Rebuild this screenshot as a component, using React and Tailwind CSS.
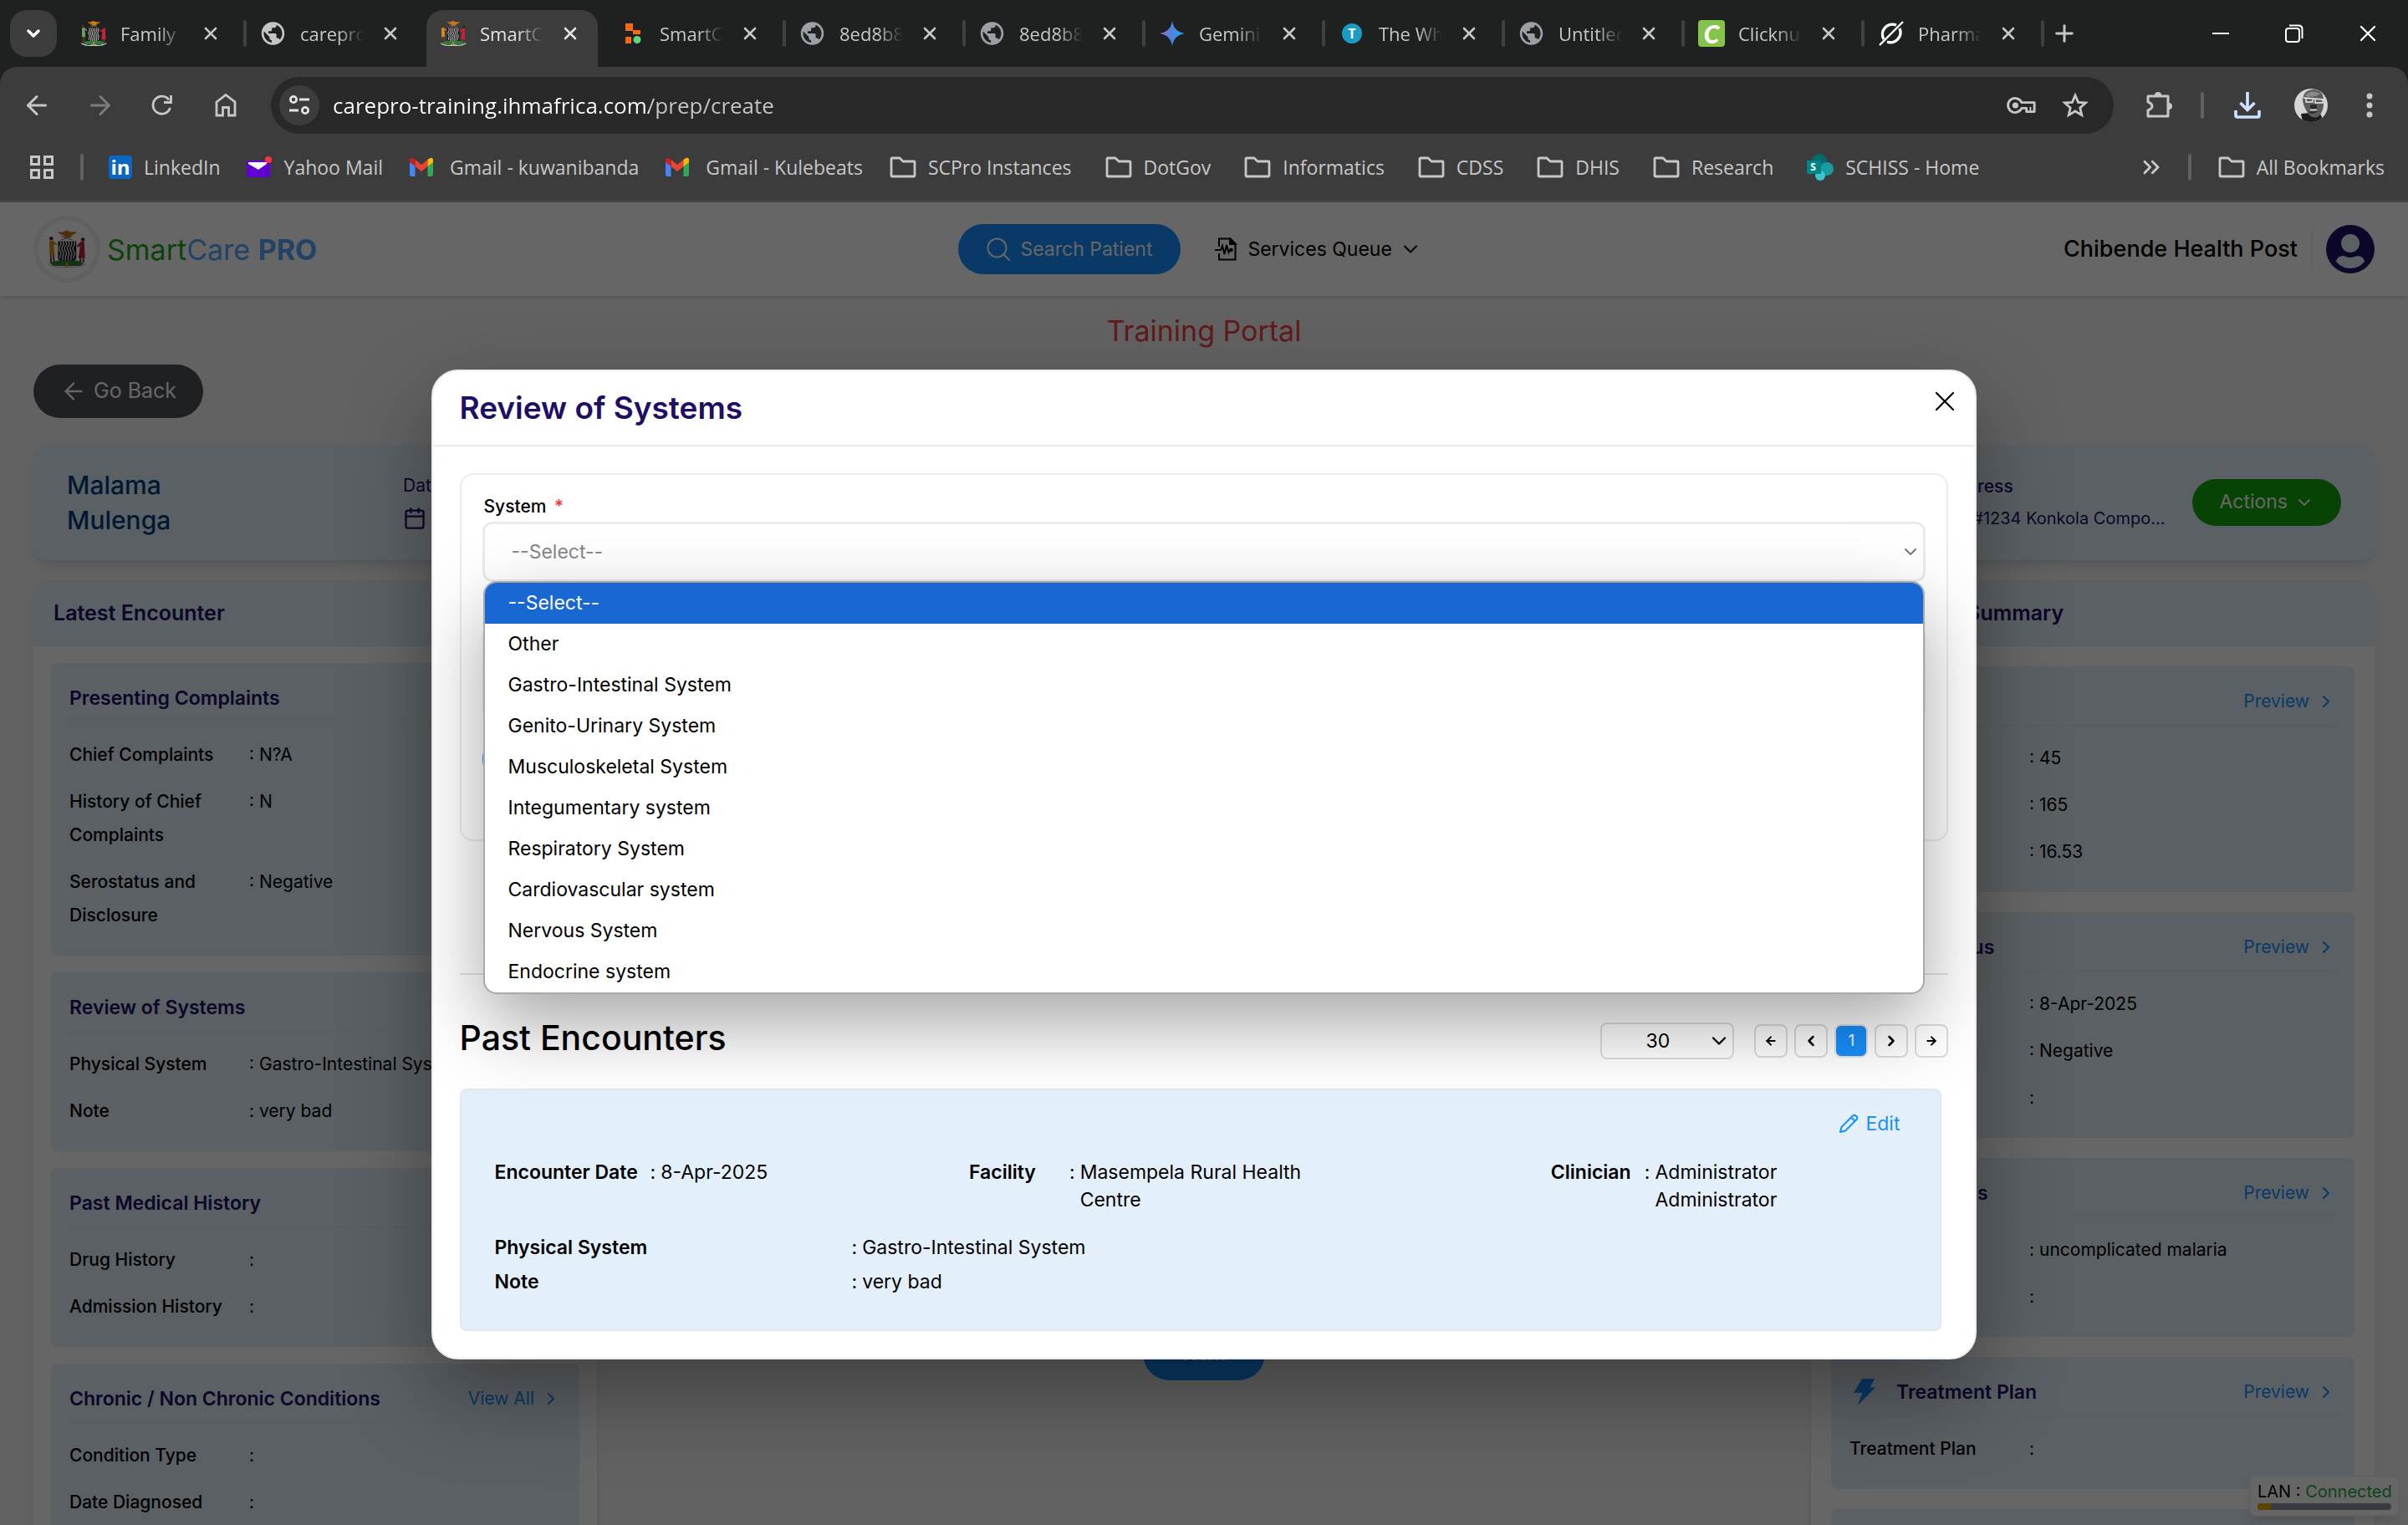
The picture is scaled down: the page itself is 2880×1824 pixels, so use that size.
import React from "react";
import {
  ArrowLeft,
  ArrowRight,
  Calendar,
  ChevronDown,
  ChevronLeft,
  ChevronRight,
  ChevronsRight,
  MapPin,
  Plus,
  X,
} from "lucide-react";
import { MdPublic } from "react-icons/md";

/* ---------- Drawn icons ---------- */

function CoatOfArms({ className, left = "#d98a1c" }) {
  return (
    <svg viewBox="0 0 144 146" className={className} aria-hidden="true">
      <path d="M38 8 Q52 14 62 8 Q72 2 80 8 Q92 14 108 8 Q104 20 88 22 L84 30 H64 L60 22 Q44 20 38 8Z" fill="#c9791a" />
      <path d="M50 40 L92 26 M94 40 L52 26" stroke="#8a6a4a" strokeWidth="3" />
      <path d="M40 44 H106 V106 Q104 118 73 126 Q42 118 40 106Z" fill="#141414" />
      <g stroke="#e8e8e8" strokeWidth="4" fill="none">
        <path d="M47 44 q7 9 0 18 t0 18 t0 18 v10" />
        <path d="M57 44 q7 9 0 18 t0 18 t0 18 v16" />
        <path d="M67 44 q7 9 0 18 t0 18 t0 18 v20" />
        <path d="M77 44 q7 9 0 18 t0 18 t0 18 v20" />
        <path d="M87 44 q7 9 0 18 t0 18 t0 18 v16" />
        <path d="M97 44 q7 9 0 18 t0 18 t0 18 v10" />
      </g>
      <circle cx="15" cy="34" r="7" fill="#5a2d1a" />
      <path d="M8 42 H22 L36 54 L33 59 L24 53 L27 92 H9Z" fill={left} />
      <path d="M11 92 H16 L17 124 H11Z M20 92 H25 L28 124 H22Z" fill="#6b3a22" />
      <circle cx="130" cy="38" r="7" fill="#4a1d16" />
      <path d="M123 46 H135 L138 106 H114 L120 62 L111 66 L108 60Z" fill="#c8203a" />
      <path d="M118 106 H124 V122 H118Z M129 106 H135 V122 H129Z" fill="#6b3a22" />
      <path d="M14 124 Q40 108 72 116 Q106 108 132 124 L126 134 H20Z" fill="#2e7d3c" />
      <path d="M4 124 Q30 142 66 134 H80 Q112 142 142 124 V130 Q112 146 72 140 Q30 146 4 130Z" fill="#d2d2d2" />
      <path d="M68 120 H76 V138 H68Z" fill="#d98a1c" />
    </svg>
  );
}

function Globe({ className }) {
  return <MdPublic className={className} aria-hidden="true" />;
}

function Blocks() {
  return (
    <svg viewBox="0 0 32 32" className="size-8" aria-hidden="true">
      <path d="M7 4h9v8h9v5H16v-4H7z" fill="#f9690e" />
      <path d="M7 20h7v8H7z" fill="#f9690e" />
      <circle cx="21" cy="23.500" r="4.5" fill="#5fd77c" />
    </svg>
  );
}

function GeminiStar() {
  return (
    <svg viewBox="0 0 32 32" className="size-8" aria-hidden="true">
      <defs>
        <linearGradient id="gem" x1="0" y1="0" x2="1" y2="0">
          <stop offset="0" stopColor="#a06bc4" />
          <stop offset="0.5" stopColor="#4a86e0" />
          <stop offset="1" stopColor="#22a7e8" />
        </linearGradient>
      </defs>
      <path d="M16 1 Q18 14 31 16 Q18 18 16 31 Q14 18 1 16 Q14 14 16 1Z" fill="url(#gem)" />
    </svg>
  );
}

function LetterDisc() {
  return (
    <span className="flex size-6 items-center justify-center rounded-full bg-[#1a9cc4] text-base font-bold text-white">
      T
    </span>
  );
}

function LetterC() {
  return (
    <span className="flex size-8 items-center justify-center rounded-sm bg-[#84c44a] font-[Lato] text-3xl leading-none font-black text-white italic">
      C
    </span>
  );
}

function SlashedRing() {
  return (
    <svg viewBox="0 0 32 32" className="size-8" fill="none" stroke="#fff" aria-hidden="true">
      <path d="M26 10a12 12 0 0 1-15 16M7 23a12 12 0 0 1 15-17" strokeWidth="3.4" />
      <path d="M2 30 L30 2" strokeWidth="2.4" />
    </svg>
  );
}

function TuneIcon() {
  return (
    <svg viewBox="0 0 28 28" className="size-7" fill="none" stroke="#e3e3e3" strokeWidth="2.8" aria-hidden="true">
      <circle cx="7" cy="7" r="3.6" />
      <path d="M14 7h12M2 20h11" />
      <circle cx="21" cy="20" r="3.6" />
    </svg>
  );
}

function HomeIcon() {
  return (
    <svg viewBox="0 0 28 32" className="h-8 w-7" fill="none" stroke="#c7c7c7" strokeWidth="2.8" aria-hidden="true">
      <path d="M3 12 L14 3.5 L25 12 V28 H17.5 V18.5 H10.5 V28 H3Z" />
    </svg>
  );
}

function ReloadIcon() {
  return (
    <svg viewBox="0 0 28 28" className="size-7" fill="none" stroke="#c7c7c7" strokeWidth="2.8" aria-hidden="true">
      <path d="M23.5 17 A10.5 10.5 0 1 1 22 7.5" />
      <path d="M24.5 2 V10.5 H16" />
    </svg>
  );
}

function KeyIcon() {
  return (
    <svg viewBox="0 0 38 24" className="h-6 w-9" fill="none" stroke="#c7c7c7" strokeWidth="3" aria-hidden="true">
      <path d="M19 8.5 A9 9 0 1 0 19 15.5 H25 V20 H35 V8.500Z" strokeLinejoin="round" />
      <circle cx="11" cy="12" r="3.8" fill="#c7c7c7" stroke="none" />
      <path d="M30 20 V14" strokeWidth="2" />
    </svg>
  );
}

function StarIcon() {
  return (
    <svg viewBox="0 0 34 32" className="h-8 w-9" fill="none" stroke="#c7c7c7" strokeWidth="2.8" aria-hidden="true">
      <path d="M17 4 L20.600 12.300 L29.500 13 L22.800 19 L24.800 27.600 L17 23 L9.200 27.600 L11.200 19 L4.500 13 L13.400 12.300Z" />
    </svg>
  );
}

function PuzzleIcon() {
  return (
    <svg viewBox="0 0 36 36" className="size-9" aria-hidden="true">
      <path
        d="M5 7 H29 V31 H5 V24 Q10 22 10 19 Q10 16 5 14Z"
        fill="none"
        stroke="#c7c7c7"
        strokeWidth="3"
        strokeLinejoin="round"
      />
      <path d="M13 6 a4 4 0 0 1 8 0z M30 15 a4 4 0 0 1 0 8z" fill="#c7c7c7" />
    </svg>
  );
}

function DownloadIcon() {
  return (
    <svg viewBox="0 0 32 32" className="size-8" fill="none" stroke="#d0e2ff" strokeWidth="3.6" aria-hidden="true">
      <path d="M16 0 V21 M7.500 13 L16 21.500 L24.500 13" />
      <path d="M2 22 V28 Q2 30 4 30 H28 Q30 30 30 28 V22" />
    </svg>
  );
}

function ProfilePhoto() {
  return (
    <svg viewBox="0 0 40 40" className="size-10" aria-hidden="true">
      <defs>
        <clipPath id="face">
          <circle cx="20" cy="20" r="20" />
        </clipPath>
      </defs>
      <g clipPath="url(#face)">
        <rect width="40" height="40" fill="#d6d6d6" />
        <path d="M8 30 L30 28 L36 40 H10Z" fill="#1c1c1c" />
        <path d="M10 12 Q12 1 23 1 Q35 2 35 14 Q36 28 28 34 Q20 36 16 29 Q10 20 10 12Z" fill="#5b5b5b" />
        <path d="M13 8 Q20 0 31 6 Q26 10 16 10Z" fill="#8a8a8a" />
        <path d="M11 11 L35 13 M14 11 v5 h8 v-4 M25 12 v5 h9 v-4" stroke="#eee" strokeWidth="1.300" fill="none" />
        <path d="M20 20 h6 v3 h-6z M18 28 q5 2 9-1" stroke="#222" strokeWidth="1.500" fill="#333" />
        <path d="M19 25.500 h8" stroke="#ddd" strokeWidth="1.500" />
      </g>
    </svg>
  );
}

function AppsGrid() {
  return (
    <svg viewBox="0 0 28 28" className="size-7" fill="none" stroke="#c7c7c7" strokeWidth="3" aria-hidden="true">
      <path d="M1.500 1.500h9v9h-9zM17.500 1.500h9v9h-9zM1.500 17.500h9v9h-9zM17.500 17.500h9v9h-9z" />
    </svg>
  );
}

function FolderIcon() {
  return (
    <svg viewBox="0 0 32 26" className="h-7 w-8" fill="none" stroke="#c7c7c7" strokeWidth="2.800" strokeLinejoin="round" aria-hidden="true">
      <path d="M2 3 Q2 2 3 2 H12 L16 6 H29 Q30 6 30 7 V23 Q30 24 29 24 H3 Q2 24 2 23Z" />
    </svg>
  );
}

function LinkedInIcon() {
  return (
    <span className="flex size-7 items-center justify-center rounded-sm bg-[#0a66c2] text-2xl leading-none font-bold text-white">
      in
    </span>
  );
}

function YahooMailIcon() {
  return (
    <svg viewBox="0 0 30 28" className="h-7 w-8" aria-hidden="true">
      <path d="M0 6 H28 V24 Q28 26 26 26 H2 Q0 26 0 24Z" fill="#6001d2" />
      <path d="M2 8 H24 V10 L14 17 L2 10Z" fill="#fff" />
      <circle cx="26" cy="5" r="4" fill="#ff333a" />
    </svg>
  );
}

function GmailIcon() {
  return (
    <svg viewBox="0 0 30 24" className="mr-1 h-6 w-8" aria-hidden="true">
      <path d="M1 4 L7.500 9 V23 H3 Q1 23 1 21Z" fill="#4285f4" />
      <path d="M29 4 L22.500 9 V23 H27 Q29 23 29 21Z" fill="#34a853" />
      <path d="M7.500 3 L15 9 L22.500 3 V11 L15 17 L7.500 11Z" fill="#ea4335" />
      <path d="M1 4 Q1 0 4.500 1 L7.500 3 V11 L1 6Z" fill="#c5221f" />
      <path d="M29 4 Q29 0 25.500 1 L22.500 3 V11 L29 6Z" fill="#fbbc04" />
    </svg>
  );
}

function SharePointIcon() {
  return (
    <span className="relative block size-8">
      <svg viewBox="0 0 32 32" className="size-8" aria-hidden="true">
        <circle cx="15" cy="9" r="9" fill="#036c70" />
        <circle cx="24" cy="18" r="8" fill="#1a9ba1" />
        <circle cx="16" cy="26" r="6" fill="#37c6d0" />
        <rect x="0" y="8" width="17" height="16" rx="1" fill="#038387" />
      </svg>
      <span className="absolute top-2 left-1 text-xs leading-4 font-bold text-white">S</span>
    </span>
  );
}

function SearchIcon() {
  return (
    <svg viewBox="0 0 28 28" className="size-7" fill="none" stroke="currentColor" strokeWidth="2" strokeLinecap="round" aria-hidden="true">
      <circle cx="12.500" cy="12.500" r="11" />
      <path d="M20.500 20.500 L27 27" />
    </svg>
  );
}

function PulseDocument() {
  return (
    <svg viewBox="0 0 28 28" className="size-7" fill="none" stroke="currentColor" strokeWidth="2" aria-hidden="true">
      <path d="M6 11 V1.500 H19.500 L25.500 7.500 V26.500 H6 V19" />
      <path d="M19 1.500 V8 H25.500Z" fill="currentColor" />
      <path d="M1 15 H8 L10 10 L12.500 20 L15 9 L17.500 18 L19 15 H21" />
      <circle cx="20.500" cy="15" r="1.200" fill="currentColor" />
    </svg>
  );
}

function UserAvatar() {
  return (
    <svg viewBox="0 0 58 58" className="size-[58px]" aria-hidden="true">
      <circle cx="29" cy="29" r="29" fill="#1e0f66" />
      <circle cx="29" cy="22" r="11" fill="#e3effb" />
      <path d="M12 44 Q13 37 21 37 Q29 41 37 37 Q45 37 46 44 Q39 52 29 52 Q19 52 12 44Z" fill="#e3effb" />
    </svg>
  );
}

function Bolt() {
  return (
    <svg viewBox="0 0 28 34" className="ml-1 h-8 w-7" aria-hidden="true">
      <path d="M11 0 H27 L21 11 H28 L5 34 L11 18 H0Z" fill="#1890ff" />
    </svg>
  );
}

function PencilIcon() {
  return (
    <svg viewBox="0 0 24 24" className="size-6" fill="none" stroke="currentColor" strokeWidth="2" strokeLinejoin="round" aria-hidden="true">
      <path d="M2 22 L3.500 16 L17 2.500 Q19 1 21.300 3 Q23 5 21.500 7 L8 20.500Z M15 4.500 L19.500 9" />
    </svg>
  );
}

/* ---------- Browser frame ---------- */

const globe = "size-[34px] -ml-px text-[#9aa0a6]";

const tabs = [
  { title: "Family", icon: <CoatOfArms className="size-8" left="#6fa06a" />, rule: true },
  { title: "carepro", icon: <Globe className="-ml-px size-[34px] text-[#c4c4c4]" /> },
  { title: "SmartC", icon: <CoatOfArms className="size-8" />, active: true },
  { title: "SmartC", icon: <Blocks />, rule: true },
  { title: "8ed8b8", icon: <Globe className={globe} />, rule: true },
  { title: "8ed8b8", icon: <Globe className={globe} />, rule: true },
  { title: "Gemini", icon: <GeminiStar />, rule: true },
  { title: "The Wh", icon: <LetterDisc />, rule: true },
  { title: "Untitled", icon: <Globe className={globe} />, rule: true },
  { title: "Clicknu", icon: <LetterC />, rule: true },
  { title: "Pharma", icon: <SlashedRing />, rule: true },
];

const siteBookmarks = [
  { label: "LinkedIn", icon: <LinkedInIcon /> },
  { label: "Yahoo Mail", icon: <YahooMailIcon /> },
  { label: "Gmail - kuwanibanda", icon: <GmailIcon /> },
  { label: "Gmail - Kulebeats", icon: <GmailIcon /> },
];

const folderBookmarks = [
  { label: "SCPro Instances", icon: <FolderIcon /> },
  { label: "DotGov", icon: <FolderIcon /> },
  { label: "Informatics", icon: <FolderIcon /> },
  { label: "CDSS", icon: <FolderIcon /> },
  { label: "DHIS", icon: <FolderIcon /> },
  { label: "Research", icon: <FolderIcon /> },
  { label: "SCHISS - Home", icon: <SharePointIcon /> },
];

function Tab({ tab }) {
  return (
    <div className="flex h-full w-[215px] items-center justify-between">
      <div
        className={
          tab.active
            ? "flex h-full w-[205px] items-center rounded-t-[20px] bg-[#3c3c3c] pb-3 pl-4 text-[#e3e3e3]"
            : "flex h-full w-[205px] items-center pb-3 pl-4 text-[#c7c7c7]"
        }
      >
        <span className="flex w-8 shrink-0 items-center justify-center">{tab.icon}</span>
        <span className="ml-4 w-[76px] overflow-hidden mask-r-from-60% text-[22px] whitespace-nowrap">{tab.title}</span>
        <button type="button" aria-label="Close tab" className="ml-4 flex size-8 items-center justify-center">
          <X className="size-6" strokeWidth={2.6} />
        </button>
      </div>
      {tab.rule && <span className="mb-3 h-8 w-1 rounded-full bg-[#3f4141]" />}
    </div>
  );
}

function BookmarkLink({ b }) {
  return (
    <a href="#bookmark" className="flex items-center gap-3.5">
      {b.icon}
      {b.label}
    </a>
  );
}

function BrowserFrame() {
  return (
    <header className="shrink-0 bg-[#1f2121] font-['Open_Sans',sans-serif] text-[#c7c7c7]">
      <div className="flex h-20 justify-between">
        <div className="flex pt-3 pl-3">
          <button type="button" aria-label="Search tabs" className="mr-3 flex size-14 items-center justify-center rounded-[20px] bg-[#3c3c3c] text-white">
            <ChevronDown className="size-6" strokeWidth={3.5} />
          </button>
          {tabs.map((tab, i) => (
            <Tab key={i} tab={tab} />
          ))}
          <button type="button" aria-label="New tab" className="mb-3 ml-1 flex size-10 items-center justify-center self-center">
            <Plus className="size-8" strokeWidth={2.2} />
          </button>
        </div>
        <div className="flex items-center gap-14 pr-8 text-white">
          <button type="button" aria-label="Minimize" className="flex size-8 items-center justify-center">
            <span className="h-0.5 w-5 bg-white" />
          </button>
          <button type="button" aria-label="Restore" className="flex size-8 items-center justify-center">
            <svg viewBox="0 0 22 22" className="size-[22px]" fill="none" stroke="#fff" strokeWidth="2" aria-hidden="true">
              <rect x="1" y="5" width="16" height="16" rx="3" />
              <path d="M5 1.500 H16 Q20.500 1.500 20.500 6 V17" />
            </svg>
          </button>
          <button type="button" aria-label="Close window" className="flex size-8 items-center justify-center">
            <X className="size-8" strokeWidth={1.6} />
          </button>
        </div>
      </div>

      <div className="rounded-t-[20px] bg-[#3c3c3c]">
        <div className="flex items-center pt-3 pr-9 pl-6">
          <button type="button" aria-label="Back" className="mr-9 p-0.5">
            <ArrowLeft className="size-9" strokeWidth={2} />
          </button>
          <button type="button" aria-label="Forward" className="mr-10 p-0.5 text-[#7c7c7c]">
            <ArrowRight className="size-9" strokeWidth={2} />
          </button>
          <button type="button" aria-label="Reload" className="mr-12">
            <ReloadIcon />
          </button>
          <button type="button" aria-label="Home" className="mr-10">
            <HomeIcon />
          </button>
          <div className="flex h-[68px] grow items-center rounded-full bg-[#282828] pr-7 pl-2.5">
            <button type="button" aria-label="Site information" className="mr-4 flex size-12 items-center justify-center rounded-full bg-[#3c3c3c]">
              <TuneIcon />
            </button>
            <input
              type="text"
              aria-label="Address"
              defaultValue="carepro-training.ihmafrica.com/prep/create"
              className="grow bg-[linear-gradient(90deg,#ffffff_378px,#c7c7c7_378px)] bg-clip-text text-[26px] text-transparent outline-none"
            />
            <button type="button" aria-label="Passwords" className="mr-7">
              <KeyIcon />
            </button>
            <button type="button" aria-label="Bookmark">
              <StarIcon />
            </button>
          </div>
          <button type="button" aria-label="Extensions" className="ml-9">
            <PuzzleIcon />
          </button>
          <span className="ml-8 h-8 w-1 rounded-full bg-[#606060]" />
          <button type="button" aria-label="Downloads" className="ml-9">
            <DownloadIcon />
          </button>
          <button type="button" aria-label="Profile" className="ml-10">
            <ProfilePhoto />
          </button>
          <button type="button" aria-label="Menu" className="ml-10 flex w-5 justify-center">
            <svg viewBox="0 0 8 30" className="h-[30px] w-2" fill="#c7c7c7" aria-hidden="true">
              <circle cx="4" cy="4" r="3.500" />
              <circle cx="4" cy="15" r="3.500" />
              <circle cx="4" cy="26" r="3.500" />
            </svg>
          </button>
        </div>

        <nav className="flex h-[82px] items-center border-b-2 border-[#484848] pr-7 pl-9 text-[23px] whitespace-nowrap">
          <button type="button" aria-label="Apps">
            <AppsGrid />
          </button>
          <span className="mr-[30px] ml-8 h-8 w-1 rounded-full bg-[#606060]" />
          <div className="flex items-center gap-[30px]">
            {siteBookmarks.map((b) => (
              <BookmarkLink key={b.label} b={b} />
            ))}
          </div>
          <div className="ml-8 flex items-center gap-10">
            {folderBookmarks.map((b) => (
              <BookmarkLink key={b.label} b={b} />
            ))}
          </div>
          <button type="button" aria-label="More bookmarks" className="ml-auto">
            <ChevronsRight className="size-8" strokeWidth={2.2} />
          </button>
          <span className="mr-8 ml-7 h-8 w-1 rounded-full bg-[#606060]" />
          <a href="#all" className="flex items-center gap-3.5">
            <FolderIcon />
            All Bookmarks
          </a>
        </nav>
      </div>
    </header>
  );
}

/* ---------- Patient page ---------- */

const leftCards = [
  {
    title: "Presenting Complaints",
    rows: [
      ["Chief Complaints", "N?A"],
      ["History of Chief Complaints", "N"],
      ["Serostatus and Disclosure", "Negative"],
    ],
  },
  {
    title: "Review of Systems",
    rows: [
      ["Physical System", "Gastro-Intestinal System"],
      ["Note", "very bad"],
    ],
  },
  {
    title: "Past Medical History",
    rows: [
      ["Drug History", ""],
      ["Admission History", ""],
    ],
  },
  {
    title: "Chronic / Non Chronic Conditions",
    link: "View All",
    rows: [
      ["Condition Type", ""],
      ["Date Diagnosed", ""],
      ["Certainty", ""],
    ],
  },
];

const rightCards = [
  { title: "Vitals", rows: [["Weight", "45"], ["Height", "165"], ["BMI", "16.53"]] },
  { title: "HIV Status", rows: [["Test Date", "8-Apr-2025"], ["Result", "Negative"], ["Type", ""]] },
  { title: "Diagnosis", rows: [["Diagnosis", "uncomplicated malaria"], ["Condition", ""]] },
  { title: "Treatment Plan", rows: [["Treatment Plan", ""]] },
  { title: "Medication", rows: [["Medicine", ""]] },
];

function CardLink({ children }) {
  return (
    <a href="#more" className="flex items-center gap-2 text-[21px] text-[#1890ff]">
      {children}
      <ChevronRight className="size-6" strokeWidth={2} />
    </a>
  );
}

function InfoCard({ card, icon }) {
  return (
    <section className="rounded-lg bg-[#e3effb] px-[22px] pt-[22px] pb-7">
      <div className="flex items-center justify-between border-b-2 border-[#e6e9ec] pb-2 leading-10">
        <h3 className="flex items-center gap-6 text-[23px] font-semibold text-[#1e0f66]">
          {icon}
          {card.title}
        </h3>
        {card.link && <CardLink>{card.link}</CardLink>}
      </div>
      <dl className="flex flex-col gap-4 pt-[18px] text-[21px] leading-10">
        {card.rows.map(([k, v]) => (
          <div key={k} className="flex">
            <dt className="w-[215px] shrink-0 pr-6 font-medium">{k}</dt>
            <dd className="whitespace-nowrap">: {v}</dd>
          </div>
        ))}
      </dl>
    </section>
  );
}

function Page() {
  return (
    <div className="bg-[#f6f6f6]">
      <div className="flex h-[112px] items-center justify-between bg-white px-10 shadow-md">
        <div className="flex items-center gap-2">
          <span className="flex size-20 items-center justify-center rounded-full border-[6px] border-[#f0f0f0]">
            <CoatOfArms className="size-12" />
          </span>
          <span className="text-[34px] text-[#57a8ff]">
            <span className="text-[#1ca71a]">Smart</span>Care <b>PRO</b>
          </span>
        </div>
        <div className="flex items-center">
          <button type="button" className="mr-10 flex h-[60px] items-center gap-3 rounded-full bg-[#1890ff] px-[34px] text-[23px] text-white">
            <SearchIcon />
            Search Patient
          </button>
          <button type="button" className="flex items-center gap-3 text-[23px]">
            <PulseDocument />
            Services Queue
            <ChevronDown className="-ml-1 size-7" strokeWidth={1.8} />
          </button>
        </div>
        <div className="flex items-center">
          <span className="border-r-2 border-[#eee] py-0.5 pr-4 text-[27px] font-medium">Chibende Health Post</span>
          <span className="ml-4">
            <UserAvatar />
          </span>
        </div>
      </div>

      <div className="px-10 pt-4">
        <p className="text-center text-[34px] leading-[52px] text-[#ef4444]">Training Portal</p>
        <button type="button" className="mt-3.5 flex h-16 items-center gap-2 rounded-full bg-[#4e505a] px-8 text-[25px] text-white">
          <ArrowLeft className="size-8" strokeWidth={1.8} />
          Go Back
        </button>

        <section className="mt-[31px] flex h-[139px] items-center justify-between rounded-2xl bg-[#e3effb] px-10 text-[21px] text-[#1e0f66] shadow-lg">
          <div className="flex items-center gap-[220px]">
            <h2 className="w-[182px] text-[30px] leading-[42px] font-medium text-[#00407f]">Malama Mulenga</h2>
            <div className="flex flex-col gap-2">
              <span>Date of Birth</span>
              <span className="flex items-center gap-2">
                <Calendar className="size-7" strokeWidth={2} />
                12-Feb-1990
              </span>
            </div>
          </div>
          <div className="flex items-center gap-8">
            <div className="flex w-[266px] flex-col gap-2">
              <span className="font-medium">Address</span>
              <span className="flex items-center text-[20px] whitespace-nowrap">
                <MapPin className="size-5" />
                H#1234 Konkola Compo...
              </span>
            </div>
            <button type="button" className="flex h-14 items-center gap-2 rounded-full bg-[#14a911] px-8 text-[23px] text-white">
              Actions
              <ChevronDown className="size-6" strokeWidth={1.8} />
            </button>
          </div>
        </section>

        <div className="mt-6 flex items-start justify-between">
          <aside className="w-[674px] overflow-hidden rounded-t-2xl bg-white shadow-lg">
            <h2 className="bg-[#e3effb] px-6 text-[25px] leading-[79px] font-semibold text-[#1e0f66]">Latest Encounter</h2>
            <div className="flex flex-col gap-5 px-[21px] py-5">
              {leftCards.map((c) => (
                <InfoCard key={c.title} card={c} />
              ))}
            </div>
          </aside>
          <button type="button" className="mt-[893px] h-16 w-[146px] rounded-full bg-[#1890ff] text-[23px] text-white">
            Next
          </button>
          <aside className="w-[674px] overflow-hidden rounded-t-2xl bg-white shadow-lg">
            <h2 className="bg-[#e3effb] px-6 text-[25px] leading-[79px] font-semibold text-[#1e0f66]">Client Health Summary</h2>
            <div className="flex flex-col gap-6 px-6 py-6">
              {rightCards.map((c) => (
                <InfoCard key={c.title} card={{ ...c, link: "Preview" }} icon={<Bolt />} />
              ))}
            </div>
          </aside>
        </div>
      </div>

      <div className="absolute right-2.5 bottom-2.5 w-[180px] rounded-lg border-2 border-[#f0f0f0] bg-white px-2 pt-1 pb-1.5 shadow-lg">
        <p className="text-[20px] leading-7 whitespace-nowrap">
          LAN : <span className="text-[#22a745]">Connected</span>
        </p>
        <div className="h-2 overflow-hidden rounded-full bg-[#8d96a0]">
          <div className="h-2 w-4 bg-[#e6a800]" />
        </div>
      </div>
    </div>
  );
}

/* ---------- Dialog ---------- */

const options = [
  "--Select--",
  "Other",
  "Gastro-Intestinal System",
  "Genito-Urinary System",
  "Musculoskeletal System",
  "Integumentary system",
  "Respiratory System",
  "Cardiovascular system",
  "Nervous System",
  "Endocrine system",
];

function PagerButton({ label, active, children }) {
  return (
    <button
      type="button"
      aria-label={label}
      className={
        active
          ? "flex size-10 items-center justify-center rounded-lg border-2 border-[#e4e4e4] bg-[#1890ff] text-[19px] text-white"
          : "flex size-10 items-center justify-center rounded-lg border-2 border-[#dcdcdc]"
      }
    >
      {children}
    </button>
  );
}

function Pair({ label, value, labelClass, valueClass }) {
  return (
    <div className="flex">
      <dt className={labelClass}>{label}</dt>
      <dd className="mr-1.5">:</dd>
      <dd className={valueClass}>{value}</dd>
    </div>
  );
}

function ReviewDialog() {
  return (
    <div
      role="dialog"
      aria-labelledby="dialog-title"
      className="mx-auto mt-[200px] w-[64.2%] rounded-[32px] border-2 border-[#ececec] bg-white shadow-[0_40px_100px_rgba(0,0,0,0.35)]"
    >
      <div className="flex h-[90px] items-start justify-between border-b-2 border-[#ebebeb] pr-4 pl-8">
        <h2 id="dialog-title" className="pt-5 text-[37px] leading-[48px] font-semibold text-[#1e0f66]">
          Review of Systems
        </h2>
        <button type="button" aria-label="Close" className="pt-4">
          <X className="size-10" strokeWidth={1.3} />
        </button>
      </div>

      <div className="px-8 pt-8 pb-8">
        <form className="rounded-2xl border-2 border-[#ebebeb] px-[25px] pt-5 pb-16">
          <label htmlFor="system" className="block pl-0.5 text-[21px] leading-9 font-medium">
            System <span className="ml-1 text-red-500">*</span>
          </label>
          <div className="relative">
            <select id="system" className="h-[72px] w-full appearance-none rounded-xl border-[3px] border-[#ebebeb] bg-white px-8 text-[23px] text-[#85878c]">
              {options.map((o) => (
                <option key={o}>{o}</option>
              ))}
            </select>
            <ChevronDown className="pointer-events-none absolute top-6 right-1.5 size-6 text-[#77797e]" strokeWidth={2} />
            <ul
              role="listbox"
              aria-label="System"
              className="absolute inset-x-px top-[71px] z-10 overflow-hidden rounded-2xl border-2 border-[#a9a9a9] bg-white text-[23px] leading-[49px] shadow-[0_36px_90px_rgba(0,0,0,0.35)]"
            >
              {options.map((o, i) => (
                <li
                  key={o}
                  role="option"
                  aria-selected={i === 0}
                  className={i === 0 ? "h-[49px] bg-[#1967d2] px-7 text-white" : "h-[49px] px-7"}
                >
                  {o}
                </li>
              ))}
            </ul>
          </div>
          <label htmlFor="note" className="mt-4 block pl-0.5 text-[21px] leading-9 font-medium">
            Note
          </label>
          <textarea id="note" className="block h-[112px] w-full rounded-xl border-[3px] border-[#ebebeb]" />
          <button type="button" className="mt-4 block h-16 w-36 rounded-full bg-[#1890ff] text-[23px] text-white">
            Add
          </button>
        </form>

        <div className="flex h-40 items-center justify-center border-b-2 border-[#e3e3e3]">
          <button type="button" className="h-16 w-36 rounded-full bg-[#1890ff] text-[23px] text-white">
            Save
          </button>
        </div>

        <div className="flex items-center justify-between pt-12 pb-[34px]">
          <h3 className="text-[41px] leading-[54px] font-medium">Past Encounters</h3>
          <div className="flex items-center gap-2 pt-2">
            <div className="relative mr-4 w-40">
              <select aria-label="Items per page" className="h-11 w-full appearance-none rounded-lg border-2 border-[#dedede] pl-[52px] text-[23px]">
                <option>30</option>
              </select>
              <ChevronDown className="pointer-events-none absolute top-2 right-1 size-7" strokeWidth={2} />
            </div>
            <PagerButton label="First page">
              <ArrowLeft className="size-4" strokeWidth={3} />
            </PagerButton>
            <PagerButton label="Previous page">
              <ChevronLeft className="size-5" strokeWidth={3} />
            </PagerButton>
            <PagerButton label="Page 1" active>
              1
            </PagerButton>
            <PagerButton label="Next page">
              <ChevronRight className="size-5" strokeWidth={3} />
            </PagerButton>
            <PagerButton label="Last page">
              <ArrowRight className="size-4" strokeWidth={3} />
            </PagerButton>
          </div>
        </div>

        <article className="mr-2 rounded-lg border-2 border-[#e4e8ec] bg-[#e3effb] px-10 pt-5 pb-9 text-[23px]">
          <div className="flex justify-end pr-2">
            <button type="button" className="flex items-center gap-2 leading-10 text-[#1890ff]">
              <PencilIcon />
              Edit
            </button>
          </div>
          <dl className="flex pt-[22px] leading-[33px]">
            <div className="w-[33.6%]">
              <Pair label="Encounter Date" value="8-Apr-2025" labelClass="w-[186px] font-semibold" />
            </div>
            <div className="w-[41.2%]">
              <Pair label="Facility" value="Masempela Rural Health Centre" labelClass="w-[120px] font-semibold" valueClass="w-[290px]" />
            </div>
            <div>
              <Pair label="Clinician" value="Administrator Administrator" labelClass="w-[112px] font-semibold" valueClass="w-[180px]" />
            </div>
          </dl>
          <dl className="pt-5 leading-[41px]">
            <Pair label="Physical System" value="Gastro-Intestinal System" labelClass="w-[427px] font-semibold" />
            <Pair label="Note" value="very bad" labelClass="w-[427px] font-semibold" />
          </dl>
        </article>
      </div>
    </div>
  );
}

export default function App() {
  return (
    <div className="flex h-screen flex-col overflow-hidden font-['Inter',sans-serif] text-black">
      <BrowserFrame />
      <main className="relative min-h-0 grow overflow-hidden">
        <Page />
        <div className="absolute inset-0 bg-black/60">
          <ReviewDialog />
        </div>
      </main>
    </div>
  );
}
